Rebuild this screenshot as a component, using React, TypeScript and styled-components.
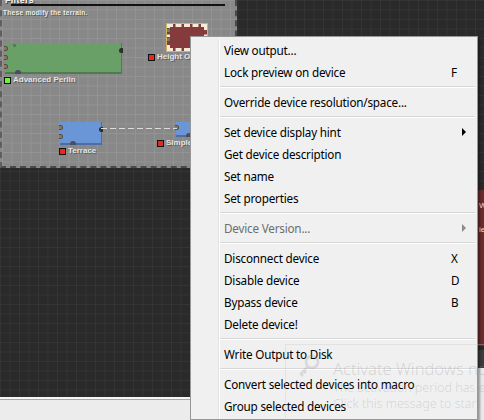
import React from 'react';
import styled, { createGlobalStyle, css } from 'styled-components';

const Global = createGlobalStyle`
  html, body { margin: 0; padding: 0; background: #2b2b2b; }
  body { width: 484px; height: 420px; overflow: hidden; font-family: "Noto Sans", "Open Sans", sans-serif; }
  * { box-sizing: border-box; }
`;

const Page = styled.div`
  position: relative;
  width: 484px;
  height: 420px;
  display: flex;
  flex-direction: column;
  overflow: hidden;
`;

const Canvas = styled.div`
  position: relative;
  height: 397px;
  flex: none;
  display: flex;
  align-items: flex-start;
  background-color: #2a2a2a;
  background-image:
    linear-gradient(to right, #343434 1px, transparent 1px),
    linear-gradient(to bottom, #343434 1px, transparent 1px);
  background-size: 9.5px 9.5px;
`;

const StatusBar = styled.div`
  flex: 1;
  background: #ececec;
  border-top: 2px solid #f6f6f6;
  box-shadow: inset 0 1px 0 #a8a8a8;
`;

const Group = styled.div`
  position: relative;
  flex: none;
  display: flex;
  flex-direction: column;
  width: 237px;
  height: 168px;
  background-color: #888888;
  background-image:
    linear-gradient(to right, #939393 1px, transparent 1px),
    linear-gradient(to bottom, #939393 1px, transparent 1px);
  background-size: 9.5px 9.5px;
  border-left: 2px dashed #5e5e5e;
  border-right: 2px dashed #4a4a4a;
  border-bottom: 2px dashed #4a4a4a;
`;

const GroupTitle = styled.div`
  margin: -5px 0 0 3px;
  font-family: "Liberation Sans", sans-serif;
  font-weight: bold;
  font-size: 9px;
  line-height: 10px;
  color: #f2f2f2;
  text-shadow: 1px 1px 0 #444;
  letter-spacing: 0.3px;
`;

const Rule = styled.div`
  margin: -1px 0 0 9px;
  width: 214px;
  height: 2px;
  background: #111;
`;

const GroupDesc = styled.div`
  margin: 3px 0 0 1px;
  font-family: "Liberation Sans", sans-serif;
  font-weight: bold;
  font-size: 6.6px;
  line-height: 7px;
  color: #eaeaea;
  text-shadow: 1px 1px 0 #5a5a5a;
  letter-spacing: 0.25px;
`;

type Tone = 'green' | 'red' | 'blue';
const tones: Record<Tone, { bg: string; edge: string }> = {
  green: { bg: '#68a068', edge: '#4f7c4f' },
  red: { bg: '#853b3b', edge: '#5e2727' },
  blue: { bg: '#6a95d6', edge: '#4b6ea6' },
};

/* a device on the free canvas: its box, and its label below */
const Device = styled.div`
  position: absolute;
  display: flex;
  flex-direction: column;
  align-items: flex-start;
  gap: 2px;
`;

const Body = styled.div<{ $tone: Tone; $selected?: boolean; $w: number; $h: number }>`
  position: relative;
  width: ${(p) => p.$w}px;
  height: ${(p) => p.$h}px;
  display: flex;
  justify-content: space-between;
  align-items: flex-start;
  padding: 3px 0 0;
  background: ${(p) => tones[p.$tone].bg};
  border-right: 1px solid ${(p) => tones[p.$tone].edge};
  border-bottom: 2px solid ${(p) => tones[p.$tone].edge};
  ${(p) =>
    p.$selected &&
    css`
      border: 3px dashed #f4ecd8;
      outline: 1px solid #d2b264;
      padding-top: 1px;
    `}
`;

const Inputs = styled.div<{ $out?: number }>`
  display: flex;
  flex-direction: column;
  gap: 4px;
  margin-left: ${(p) => p.$out ?? -1}px;
`;

const InPort = styled.span`
  width: 4px;
  height: 5px;
  border-radius: 0 3px 3px 0;
  background: #8d7866;
  border: 1px solid #5a4a3c;
  border-left: none;
`;

const OutPort = styled.span`
  margin: 2px -2px 0 0;
  width: 4px;
  height: 5px;
  border-radius: 3px 0 0 3px;
  background: #2e2e2e;
`;

const BottomPort = styled.span`
  position: absolute;
  left: 10px;
  bottom: -2px;
  width: 6px;
  height: 4px;
  border-radius: 3px 3px 0 0;
  background: #4d4a62;
`;

const TopMark = styled.span`
  position: absolute;
  left: 8px;
  top: -1px;
  font-family: "Liberation Sans", sans-serif;
  font-size: 6px;
  line-height: 6px;
  color: #2a3a2a;
`;

const Label = styled.div<{ $shift: number }>`
  display: flex;
  align-items: center;
  gap: 2px;
  margin-left: ${(p) => p.$shift}px;
  font-family: "Liberation Sans", sans-serif;
  font-weight: bold;
  font-size: 8px;
  line-height: 8px;
  color: #e4e4e4;
  text-shadow: 1px 1px 0 #5e5e5e;
  white-space: nowrap;
`;

const Swatch = styled.span<{ $c: string }>`
  width: 7px;
  height: 7px;
  background: ${(p) => p.$c};
  border: 1px solid #111;
  flex: none;
`;

const Wire = styled.svg`
  position: absolute;
  left: 99px;
  top: 127px;
  overflow: visible;
`;

const RedWindow = styled.div`
  position: absolute;
  left: 478px;
  top: 190px;
  width: 20px;
  height: 156px;
  background: #6a2b2b;
  font-family: "Liberation Sans", sans-serif;
  font-size: 8px;
  color: #f0e0e0;
  padding: 4px 0 0 1px;
  line-height: 24px;
`;

const GreyWindow = styled.div`
  position: absolute;
  left: 478px;
  top: 350px;
  width: 20px;
  height: 70px;
  background: #e9e9e9;
  border-top: 18px solid #3b3b3b;
`;

const Menu = styled.div`
  position: absolute;
  left: 190px;
  top: 36px;
  width: 288px;
  height: 384px;
  background: #f0f0f0;
  border: 1px solid #979797;
  padding: 2px;
  box-shadow: 2px 2px 2px rgba(0, 0, 0, 0.35);
  font-family: "Noto Sans", "Open Sans", sans-serif;
  font-size: 11.7px;
  color: #000;
  &::before {
    content: '';
    position: absolute;
    left: 27px;
    top: 2px;
    bottom: 0;
    width: 1px;
    background: #e2e3e3;
    box-shadow: 1px 0 0 #ffffff;
  }
`;

const Row = styled.div<{ $disabled?: boolean }>`
  position: relative;
  height: 22px;
  display: grid;
  grid-template-columns: 1fr 24px;
  align-items: center;
  padding-left: 31px;
  color: ${(p) => (p.$disabled ? '#6d6d6d' : '#000')};
  white-space: nowrap;
  letter-spacing: -0.2px;
`;

const Shortcut = styled.span`
  display: flex;
  align-items: center;
`;

const Arrow = styled.span<{ $disabled?: boolean }>`
  margin-left: 11px;
  width: 0;
  height: 0;
  border-top: 4px solid transparent;
  border-bottom: 4px solid transparent;
  border-left: 4px solid ${(p) => (p.$disabled ? '#8a8a8a' : '#000')};
`;

const Separator = styled.div`
  position: relative;
  height: 8px;
  margin-left: 27px;
  &::after {
    content: '';
    position: absolute;
    left: 0;
    right: 0;
    top: 3px;
    height: 1px;
    background: #d7d7d7;
    box-shadow: 0 1px 0 #ffffff;
  }
`;

const Watermark = styled.div`
  position: absolute;
  left: 285px;
  top: 344px;
  width: 220px;
  height: 80px;
  border-left: 1px solid rgba(200, 200, 200, 0.35);
  border-top: 1px solid rgba(200, 200, 200, 0.35);
  display: grid;
  grid-template-columns: 47px 1fr;
  pointer-events: none;
`;

const KeyIcon = styled.svg`
  margin: 9px 0 0 12px;
  opacity: 0.22;
`;

const WmText = styled.div`
  padding-top: 13px;
  font-family: "Noto Sans", "Open Sans", sans-serif;
  font-weight: 300;
  white-space: nowrap;
  color: rgba(150, 150, 150, 0.32);
`;

const WmTitle = styled.div`
  font-size: 16.5px;
  line-height: 22px;
`;

const WmLine = styled.div`
  font-size: 12.5px;
  line-height: 16px;
`;

type Item =
  | { sep: true }
  | { sep?: false; label: string; shortcut?: string; submenu?: boolean; disabled?: boolean };

const items: Item[] = [
  { label: 'View output...' },
  { label: 'Lock preview on device', shortcut: 'F' },
  { sep: true },
  { label: 'Override device resolution/space...' },
  { sep: true },
  { label: 'Set device display hint', submenu: true },
  { label: 'Get device description' },
  { label: 'Set name' },
  { label: 'Set properties' },
  { sep: true },
  { label: 'Device Version...', submenu: true, disabled: true },
  { sep: true },
  { label: 'Disconnect device', shortcut: 'X' },
  { label: 'Disable device', shortcut: 'D' },
  { label: 'Bypass device', shortcut: 'B' },
  { label: 'Delete device!' },
  { sep: true },
  { label: 'Write Output to Disk' },
  { sep: true },
  { label: 'Convert selected devices into macro' },
  { label: 'Group selected devices' },
];

export default function App() {
  return (
    <>
      <Global />
      <Page>
        <Canvas>
          <Group>
            <GroupTitle>Filters</GroupTitle>
            <Rule />
            <GroupDesc>These modify the terrain.</GroupDesc>

            <Device style={{ left: 3, top: 43 }}>
              <Body $tone="green" $w={117} $h={31}>
                <TopMark>v</TopMark>
                <Inputs>
                  <InPort />
                  <InPort />
                  <InPort />
                </Inputs>
                <OutPort />
                <BottomPort />
              </Body>
              <Label $shift={-1}>
                <Swatch $c="#6cf53c" />
                Advanced Perlin
              </Label>
            </Device>

            <Device style={{ left: 165, top: 24 }}>
              <Body $tone="red" $selected $w={40} $h={27}>
                <Inputs $out={-3}>
                  <InPort />
                  <InPort />
                </Inputs>
              </Body>
              <Label $shift={-19}>
                <Swatch $c="#e8281e" />
                Height Output
              </Label>
            </Device>

            <Device style={{ left: 58, top: 122 }}>
              <Body $tone="blue" $w={42} $h={23}>
                <Inputs>
                  <InPort />
                  <InPort />
                </Inputs>
                <OutPort />
                <BottomPort />
              </Body>
              <Label $shift={-1}>
                <Swatch $c="#e8281e" />
                Terrace
              </Label>
            </Device>

            <Device style={{ left: 174, top: 122 }}>
              <Body $tone="blue" $w={40} $h={15}>
                <Inputs>
                  <InPort />
                </Inputs>
                <BottomPort />
              </Body>
              <Label $shift={-19}>
                <Swatch $c="#e8281e" />
                Simple
              </Label>
            </Device>

            <Wire width="76" height="4">
              <line x1="0" y1="1.5" x2="76" y2="1.5" stroke="#dcdcdc" strokeWidth="1" strokeDasharray="6 3" />
            </Wire>
          </Group>
          <RedWindow>
            W<br />ie
          </RedWindow>
          <GreyWindow />
        </Canvas>
        <StatusBar />

        <Menu>
          {items.map((it, i) =>
            it.sep ? (
              <Separator key={i} />
            ) : (
              <Row key={i} $disabled={it.disabled}>
                <span>{it.label}</span>
                <Shortcut>
                  {it.shortcut}
                  {it.submenu && <Arrow $disabled={it.disabled} />}
                </Shortcut>
              </Row>
            )
          )}
        </Menu>

        <Watermark>
          <KeyIcon width="22" height="24" viewBox="0 0 22 24">
            <circle cx="14" cy="8" r="6" fill="none" stroke="#888" strokeWidth="2.5" />
            <path d="M10 12 L3 20 L5 22 M6 17 L8 19" fill="none" stroke="#888" strokeWidth="2.5" />
          </KeyIcon>
          <WmText>
            <WmTitle>Activate Windows now</WmTitle>
            <WmLine>The activation period has expired.</WmLine>
            <WmLine>Click this message to start activation.</WmLine>
          </WmText>
        </Watermark>
      </Page>
    </>
  );
}
